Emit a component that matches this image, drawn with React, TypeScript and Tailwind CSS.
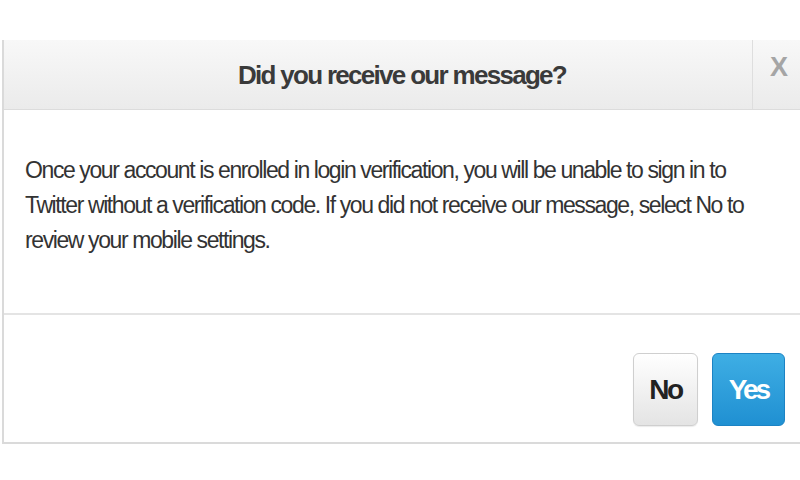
import React from "react";

export default function App() {
  return (
    <div className="w-[800px] h-[480px] bg-white overflow-hidden pt-[40px] pl-[2px]" style={{ fontFamily: '"Liberation Sans", Arial, sans-serif' }}>
      <div className="w-[798px] border-l-2 border-b-2 border-[#dadada] bg-white">
        <div className="relative h-[70px] flex items-center justify-center bg-gradient-to-b from-[#f8f8f8] to-[#ebebeb] border-b border-[#dcdcdc]">
          <span className="text-[26px] font-bold tracking-[-1.7px] text-[#3a3a3a] leading-none">Did you receive our message?</span>
          <div className="absolute right-0 top-0 h-full w-[48px] border-l border-[#dedede] flex items-center justify-center pl-[4px] pb-[14px]">
            <span className="text-[27px] font-bold text-[#a5a5a5] leading-none tracking-[-1px]">X</span>
          </div>
        </div>
        <div className="pl-[21px] pr-[20px] pt-[43px] pb-[55px] border-b-2 border-[#e4e4e4]">
          <p className="text-[23px] leading-[35px] tracking-[-1.4px] text-[#333333]">
            Once your account is enrolled in login verification, you will be unable to sign in to Twitter without a verification code. If you did not receive our message, select No to review your mobile settings.
          </p>
        </div>
        <div className="h-[127px] flex justify-end items-start gap-[14px] pt-[38px] pr-[15px]">
          <button className="w-[65px] h-[73px] rounded-[6px] border border-[#cfcfcf] bg-gradient-to-b from-[#ffffff] to-[#e4e4e4] flex items-center justify-center text-[28px] font-bold tracking-[-2.5px] text-[#222222] shadow-[0_1px_1px_rgba(0,0,0,0.08)]">
            No
          </button>
          <button className="w-[73px] h-[73px] rounded-[6px] border border-[#1c83c4] bg-gradient-to-b from-[#3eaee4] to-[#1f90d2] flex items-center justify-center text-[28px] font-bold tracking-[-3px] text-white">
            Yes
          </button>
        </div>
      </div>
    </div>
  );
}
